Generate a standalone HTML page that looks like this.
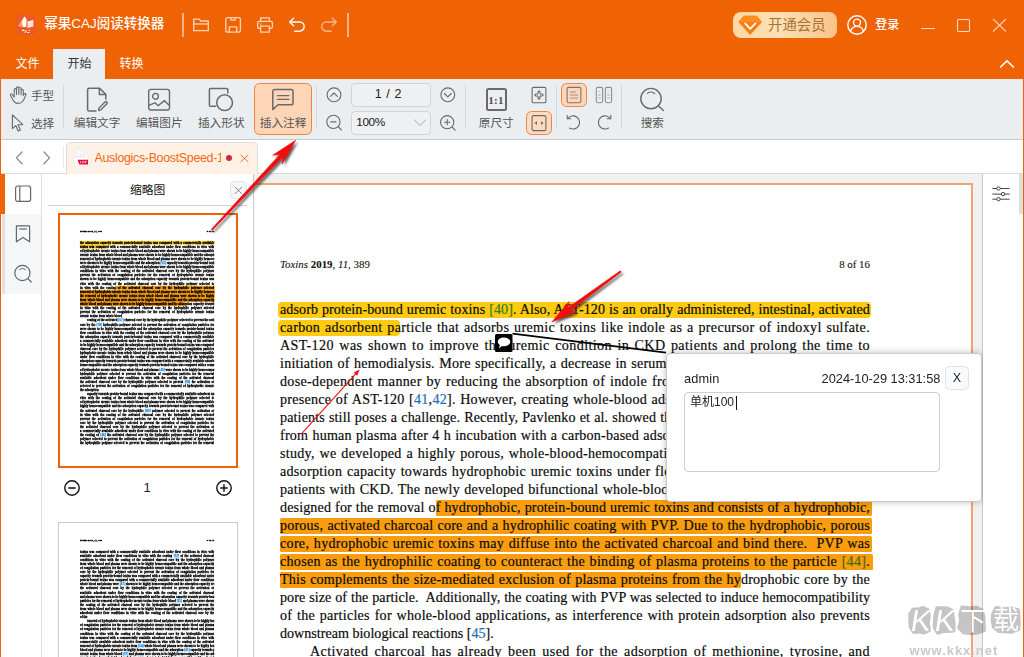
<!DOCTYPE html>
<html lang="en">
<head>
<meta charset="utf-8">
<title>CAJ Reader</title>
<style>
*{box-sizing:border-box;margin:0;padding:0}
html,body{width:1024px;height:657px;overflow:hidden;background:#fff}
body{position:relative;font-family:"Liberation Sans",sans-serif;font-size:13px;color:#333}
.abs{position:absolute}
svg.t{display:block;overflow:visible}
svg{display:block}
.tx{display:block;white-space:nowrap;font-family:"Liberation Sans","Noto Sans CJK SC",sans-serif}
/* ---------- title bar ---------- */
#titlebar{position:absolute;left:0;top:0;width:1024px;height:79px;background:#f06305}
#tabactive{position:absolute;left:53px;top:49px;width:52px;height:31px;background:#ebeef0}
/* ---------- toolbar ---------- */
#toolbar{position:absolute;left:1px;top:79px;width:1023px;height:61px;background:#ebeef0;border-bottom:1px solid #c9cccf}
.vsep{position:absolute;width:1px;background:#d3d6d9;top:85px;height:44px}
.lbl{position:absolute;color:#555}
.actbtn{position:absolute;background:#ffd5b8;border:1.2px solid #f2853c;border-radius:5.5px}
.inbox{position:absolute;border:1px solid #d2d5d8;border-radius:4px;background:#eef0f2;height:23px;color:#222;font-size:13px;line-height:21px}
/* ---------- doc tabs ---------- */
#tabrow{position:absolute;left:1px;top:140px;width:1023px;height:34px;background:#fff;border-bottom:1px solid #d9d9d9}
#doctab{position:absolute;left:66px;top:142px;width:192px;height:32px;background:#fff1e6;border:1px solid #dfdcda;border-bottom:none;border-radius:5px 5px 0 0}
/* ---------- left ---------- */
#leftedge{position:absolute;left:0;top:79px;width:1px;height:578px;background:#f06305}
#sidebar{position:absolute;left:1px;top:174px;width:41px;height:483px;background:#fff;border-right:1px solid #dcdcdc}
#thumbs{position:absolute;left:42px;top:174px;width:212px;height:483px;background:#fff;border-right:1px solid #c8c8c8}
/* ---------- doc ---------- */
#docarea{position:absolute;left:254px;top:174px;width:728px;height:483px;background:#f1f1f1;overflow:hidden}
#page{position:absolute;left:0;top:9px;width:719px;height:480px;background:#fff;border-top:2px solid #f0a472;border-right:2px solid #f0a472}
#rightpanel{position:absolute;left:982px;top:174px;width:41px;height:483px;background:#fff;border-left:1px solid #c8c8c8}
#rightedge{position:absolute;left:1023px;top:79px;width:1px;height:578px;background:#f06305}
.ln{position:absolute;left:280px;width:590px;height:18px;line-height:18px;font-family:"Liberation Serif",serif;font-size:14.1px;color:#0a0a0a;-webkit-text-stroke-width:.18px;text-align:justify;text-align-last:justify;white-space:nowrap}
.ln.last{text-align:left;text-align-last:left}
.hy{position:absolute;background:#ffcb10;height:16px;border-radius:4px}
.ho{position:absolute;background:#f99d0f;height:16px;border-radius:1.5px}
.g{color:#2e7d1e}.b{color:#1a6fb5}
.thumbtxt{height:10px}
.tl{position:absolute;left:0;width:590px;height:18px;line-height:18px;font-family:"Liberation Serif",serif;font-size:14.35px;color:#000;text-align:justify;text-align-last:justify;white-space:nowrap;-webkit-text-stroke:1.35px #000;overflow:hidden}
.tb{color:#2a8fe0;-webkit-text-stroke:1.35px #2a8fe0}
</style>
</head>
<body>
<div id="titlebar"></div>
<div id="tabactive"></div>
<div id="toolbar"></div>
<div id="tabrow"></div>
<div id="doctab"></div>
<div id="leftedge"></div>
<div id="sidebar"></div>
<div id="thumbs"></div>
<div id="docarea"><div id="page"></div></div>
<div id="rightpanel"></div>
<div id="rightedge"></div>
<div class="abs" style="left:1019px;top:174px;width:4px;height:40px;background:#d9dde5"></div>
<svg class="abs" style="left:991px;top:184px" width="20" height="20" viewBox="0 0 20 20" fill="#fff" stroke="#444" stroke-width="1"><path d="M1.4 4.5 H18.6 M1.4 10.1 H18.6 M1.4 15.2 H18.6"/><circle cx="7.5" cy="4.5" r="1.7"/><circle cx="12" cy="10.1" r="1.7"/><circle cx="7.5" cy="15.2" r="1.7"/></svg>

<!-- app icon -->
<svg class="abs" style="left:16px;top:15px" width="20" height="20" viewBox="0 0 20 20">
  <rect x="0" y="0" width="20" height="20" rx="3" fill="#ee5a26"/>
  <path d="M2 11.2 L5.8 4.6 L8.4 12.6 Z" fill="#f9a06b"/>
  <path d="M8.5 1.6 C10.9 3.6 11.6 7.2 10.4 12 L7.6 12 C5.3 9 5.7 4.4 8.5 1.6 Z" fill="#fff"/>
  <path d="M11.2 6.4 L17.4 5 L17.4 11.4 L11.6 13 Z" fill="#ffe3da"/>
  <path d="M10.7 6 L10.7 13.4" stroke="#ee5a26" stroke-width="0.7"/>
  <path d="M6 15.4h2.6M9 17.8l1.5-2.3M11.2 17.5h2.2M13 15.5l1-.5" stroke="#fff" stroke-width="1.1" fill="none"/>
</svg>
<div class="abs" style="left:44.3px;top:16.2px;color:#fff"><span class="tx" style="font-size:13.5px;line-height:16.1px;font-weight:500">幂果CAJ阅读转换器</span></div>
<div class="abs" style="left:182px;top:13px;width:1.5px;height:24px;background:#f9b186"></div>
<div class="abs" style="left:347px;top:13px;width:1.5px;height:24px;background:#f9b186"></div>
<!-- folder -->
<svg class="abs" style="left:192px;top:16px" width="18" height="18" viewBox="0 0 18 18" fill="none" stroke="#ffd5b8" stroke-width="1.3" stroke-linejoin="round">
  <path d="M1.7 14.7 V3.2 H7.2 L8.7 5 H16.3 V14.7 Z"/><path d="M1.7 8 H16.3"/>
</svg>
<!-- save -->
<svg class="abs" style="left:224px;top:16px" width="18" height="18" viewBox="0 0 18 18" fill="none" stroke="#ffd5b8" stroke-width="1.3" stroke-linejoin="round">
  <rect x="1.8" y="1.6" width="14.6" height="14.6" rx="1.8"/><path d="M5.3 16 V10.8 H12.7 V16"/><path d="M7 1.8 V4.2 H11 V1.8"/>
</svg>
<!-- print -->
<svg class="abs" style="left:256px;top:16px" width="18" height="18" viewBox="0 0 18 18" fill="none" stroke="#ffd5b8" stroke-width="1.3" stroke-linejoin="round">
  <path d="M4.6 5.4 V1.8 H13.4 V5.4"/><rect x="1.6" y="5.4" width="14.8" height="7" rx="1.6"/><rect x="4.6" y="10.2" width="8.8" height="6" fill="#f06305"/><path d="M3.6 8h2" stroke-width="1.1"/>
</svg>
<!-- undo -->
<svg class="abs" style="left:288px;top:16px" width="18" height="18" viewBox="0 0 18 18" fill="none" stroke="#fff" stroke-width="1.4" stroke-linecap="round" stroke-linejoin="round">
  <path d="M5.6 2.2 L1.8 6 L5.6 9.8"/><path d="M2.2 6 H11.6 A4.6 4.6 0 0 1 11.6 15.2 H6.8"/>
</svg>
<!-- redo -->
<svg class="abs" style="left:320px;top:16px" width="18" height="18" viewBox="0 0 18 18" fill="none" stroke="#fbb58a" stroke-width="1.4" stroke-linecap="round" stroke-linejoin="round">
  <path d="M12.4 2.2 L16.2 6 L12.4 9.8"/><path d="M15.8 6 H6.4 A4.6 4.6 0 0 0 6.4 15.2 H11.2"/>
</svg>
<!-- vip button -->
<div class="abs" style="left:733px;top:12px;width:104px;height:26px;border-radius:8px;background:linear-gradient(90deg,#ffd9a4 0%,#fde0b4 45%,#f9c388 100%)"></div>
<svg class="abs" style="left:737.8px;top:14.6px" width="24.4" height="20.4" viewBox="0 0 24 20">
  <path d="M5.6 0.6 H18.4 L23.6 6.8 L12 19.6 L0.4 6.8 Z" fill="#fb7c10"/>
  <path d="M5.6 0.6 H18.4 L23.6 6.8 H0.4 Z" fill="#ff9524" opacity=".75"/>
  <path d="M7 8.2 L12 13.6 L17.2 8.2" fill="none" stroke="#fff" stroke-width="1.7" stroke-linecap="round" stroke-linejoin="round"/>
</svg>
<div class="abs" style="left:767.5px;top:17.3px;color:#a8723a"><span class="tx" style="font-size:14.4px;line-height:17.1px;padding-left:0.5px">开通会员</span></div>
<!-- user -->
<svg class="abs" style="left:845.8px;top:13.6px" width="22" height="22" viewBox="0 0 22 22" fill="none" stroke="#fff" stroke-width="1.4">
  <circle cx="11" cy="11" r="9.2"/><circle cx="11" cy="8.6" r="3.5"/><path d="M4.6 17.4 C5.6 13.6 8 12.4 11 12.4 C14 12.4 16.4 13.6 17.4 17.4"/>
</svg>
<div class="abs" style="left:875px;top:18.2px;color:#fff"><span class="tx" style="font-size:12px;line-height:14.2px;font-weight:500;padding-left:0.3px">登录</span></div>
<!-- window controls -->
<div class="abs" style="left:921px;top:28px;width:13.5px;height:1.2px;background:#ffdcc6"></div>
<div class="abs" style="left:957px;top:19px;width:13px;height:13px;border:1.15px solid #ffdcc6;border-radius:1px"></div>
<svg class="abs" style="left:992.2px;top:18.4px" width="15" height="14.4" viewBox="0 0 15 15" preserveAspectRatio="none" stroke="#ffdcc6" stroke-width="1.15" stroke-linecap="round"><path d="M1.4 1.4 L13.6 13.6 M13.6 1.4 L1.4 13.6"/></svg>
<svg class="abs" style="left:999px;top:59px" width="16" height="10" viewBox="0 0 16 10" fill="none" stroke="#fff" stroke-width="1.7" stroke-linecap="round" stroke-linejoin="round"><path d="M1.6 8 L8 1.8 L14.4 8"/></svg>
<!-- menu -->
<div class="abs" style="left:15px;top:57.2px;color:#fff"><span class="tx" style="font-size:12px;line-height:14.3px;padding-left:0.4px">文件</span></div>
<div class="abs" style="left:67px;top:57.2px;color:#333"><span class="tx" style="font-size:12px;line-height:14.3px;padding-left:0.4px">开始</span></div>
<div class="abs" style="left:119px;top:57.2px;color:#fff"><span class="tx" style="font-size:12px;line-height:14.3px;padding-left:0.4px">转换</span></div>

<!-- hand / select -->
<svg class="abs" style="left:9px;top:85px" width="19" height="20" viewBox="0 0 19 20" fill="none" stroke="#6a6a6a" stroke-width="1.1" stroke-linecap="round" stroke-linejoin="round">
  <path d="M5.2 11.6 V4.8 a1.15 1.15 0 0 1 2.3 0 V9.5 M7.5 9.5 V3 a1.15 1.15 0 0 1 2.3 0 V9.3 M9.8 9.3 V3.6 a1.15 1.15 0 0 1 2.3 0 V9.8 M12.1 9.8 V5.4 a1.1 1.1 0 0 1 2.2 0 V10.6 C14.3 10 15 8.6 16.2 8.6 C17.2 8.7 17 9.8 16.6 10.6 C15.8 12.4 15.3 14.3 13.9 16 C12.7 17.6 11 18.4 9 18.4 C6.6 18.4 5 17 3.8 14.8 L1.6 10.4 C1 9.2 2.5 8.4 3.3 9.5 L5.2 12.2"/>
</svg>
<div class="lbl" style="left:30.5px;top:89px"><span class="tx" style="font-size:11.6px;line-height:13.7px;padding-left:0.4px">手型</span></div>
<svg class="abs" style="left:10px;top:113px" width="16" height="20" viewBox="0 0 16 20" fill="none" stroke="#6a6a6a" stroke-width="1.15" stroke-linejoin="round">
  <path d="M2.4 1.8 V15.6 L5.8 12.6 L8.2 18 L10.4 17 L8 11.8 L12.8 11.6 Z"/>
</svg>
<div class="lbl" style="left:30.5px;top:117px"><span class="tx" style="font-size:11.6px;line-height:13.7px;padding-left:0.4px">选择</span></div>
<div class="vsep" style="left:63px"></div>
<!-- edit text -->
<svg class="abs" style="left:85px;top:86px" width="24" height="27" viewBox="0 0 24 27" fill="none" stroke="#6a6a6a" stroke-width="1.5" stroke-linejoin="round" stroke-linecap="round">
  <path d="M11 25 H4.2 a1.6 1.6 0 0 1 -1.6 -1.6 V3.8 a1.6 1.6 0 0 1 1.6 -1.6 H14.6 L20.8 8.4 V13"/>
  <path d="M14.4 2.4 V8.6 H20.6"/>
  <path d="M13.6 24.6 L14 21.9 L20 15.9 a1.3 1.3 0 0 1 1.9 1.9 L15.9 23.8 Z" stroke-width="1.4"/>
</svg>
<div class="lbl" style="left:73.3px;top:116.2px"><span class="tx" style="font-size:11.7px;line-height:13.7px;padding-left:0.4px">编辑文字</span></div>
<!-- edit image -->
<svg class="abs" style="left:147px;top:87px" width="24" height="25" viewBox="0 0 24 25" fill="none" stroke="#6a6a6a" stroke-width="1.4" stroke-linejoin="round">
  <rect x="1.7" y="2.4" width="20.8" height="20.6" rx="2.2"/>
  <circle cx="8.5" cy="9.3" r="2.9"/>
  <path d="M1.8 18.4 L7.9 15.8 L11.2 18.8 L17.3 13.6 L22.4 18.6"/>
</svg>
<div class="lbl" style="left:135.5px;top:116.2px"><span class="tx" style="font-size:11.7px;line-height:13.7px;padding-left:0.4px">编辑图片</span></div>
<!-- insert shape -->
<svg class="abs" style="left:207px;top:86px" width="28" height="27" viewBox="0 0 28 27" fill="none" stroke="#6a6a6a" stroke-width="1.5" stroke-linejoin="round" stroke-linecap="butt">
  <path d="M9.2 20.3 H3.6 a1.2 1.2 0 0 1 -1.2 -1.2 V3.6 a1.2 1.2 0 0 1 1.2 -1.2 H19.6 a1.2 1.2 0 0 1 1.2 1.2 V7.6"/>
  <circle cx="17.6" cy="16.7" r="7.9"/>
</svg>
<div class="lbl" style="left:197.5px;top:116.2px"><span class="tx" style="font-size:11.7px;line-height:13.7px;padding-left:0.4px">插入形状</span></div>
<!-- insert comment (active) -->
<div class="actbtn" style="left:254px;top:83px;width:58px;height:52px"></div>
<svg class="abs" style="left:270px;top:86px" width="26" height="27" viewBox="0 0 26 27" fill="none" stroke="#6a6a6a" stroke-width="1.5" stroke-linejoin="round" stroke-linecap="round">
  <path d="M2.8 23.6 V5.2 a1.8 1.8 0 0 1 1.8 -1.8 H21.2 a1.8 1.8 0 0 1 1.8 1.8 V17 a1.8 1.8 0 0 1 -1.8 1.8 H8 Z"/>
  <path d="M7.4 9.6 H18.8 M7.4 13.4 H18.8" stroke-width="1.4"/>
</svg>
<div class="lbl" style="left:259.3px;top:116.2px"><span class="tx" style="font-size:11.7px;line-height:13.7px;padding-left:0.4px">插入注释</span></div>
<div class="vsep" style="left:316px"></div>
<!-- page nav -->
<svg class="abs" style="left:325px;top:86px" width="18" height="18" viewBox="0 0 18 18" fill="none" stroke="#6a6a6a" stroke-width="1.1" stroke-linecap="round" stroke-linejoin="round">
  <circle cx="9" cy="8.8" r="6.9"/><path d="M5.6 10.3 L9 7 L12.4 10.3"/>
</svg>
<div class="inbox" style="left:351px;top:83px;width:80px;height:24px;text-align:center;padding-right:6px;line-height:20.6px"><span style="font-size:12.5px;word-spacing:1.2px">1 / 2</span></div>
<svg class="abs" style="left:439px;top:86px" width="18" height="18" viewBox="0 0 18 18" fill="none" stroke="#6a6a6a" stroke-width="1.1" stroke-linecap="round" stroke-linejoin="round">
  <circle cx="8.8" cy="8.8" r="6.9"/><path d="M5.4 7.5 L8.8 10.8 L12.2 7.5"/>
</svg>
<svg class="abs" style="left:325px;top:113px" width="19" height="19" viewBox="0 0 19 19" fill="none" stroke="#6a6a6a" stroke-width="1.1" stroke-linecap="round">
  <circle cx="8.4" cy="8.9" r="6.6"/><path d="M13.2 13.7 L16.4 17 M5.8 8.9 H11"/>
</svg>
<div class="inbox" style="left:351px;top:111px;width:80px;height:24px;padding-left:4.3px;line-height:20.6px"><span style="font-size:11.8px;letter-spacing:-.4px">100%</span></div>
<svg class="abs" style="left:413px;top:118px" width="14" height="9" viewBox="0 0 14 9" fill="none" stroke="#c3c7ca" stroke-width="1.2" stroke-linecap="round" stroke-linejoin="round"><path d="M1.4 2 L7 7.4 L12.6 2"/></svg>
<svg class="abs" style="left:439px;top:113px" width="19" height="19" viewBox="0 0 19 19" fill="none" stroke="#6a6a6a" stroke-width="1.1" stroke-linecap="round">
  <circle cx="8.2" cy="9.2" r="6.6"/><path d="M13 14 L16.2 17.2 M5.6 9.2 H10.8 M8.2 6.6 V11.8"/>
</svg>
<div class="vsep" style="left:465px"></div>
<!-- 1:1 -->
<div class="abs" style="left:485.5px;top:88px;width:21px;height:23px;border:2px solid #6a6a6a;border-radius:2.5px"></div>
<div class="abs" style="left:486px;top:93px;width:20px;text-align:center;font-family:'Liberation Serif',serif;font-weight:bold;font-size:11px;line-height:14px;color:#505050;letter-spacing:.2px">1:1</div>
<div class="lbl" style="left:478.3px;top:116.2px"><span class="tx" style="font-size:11.7px;line-height:13.7px;padding-left:0.4px">原尺寸</span></div>
<!-- fit page -->
<svg class="abs" style="left:531px;top:86px" width="16" height="18" viewBox="0 0 16 18" fill="none" stroke="#6a6a6a" stroke-width="1.1">
  <rect x="1.1" y="1.4" width="13.8" height="15.3" rx="1.3"/>
  <rect x="6.2" y="7.1" width="3.6" height="3.8" stroke-width=".9"/>
  <path d="M8 4.1 L10 6.2 H6 Z M8 13.9 L10 11.8 H6 Z M3.1 9 L5.2 7 V11 Z M12.9 9 L10.8 7 V11 Z" fill="#6a6a6a" stroke="none"/>
</svg>
<!-- fit width active -->
<div class="actbtn" style="left:526px;top:111px;width:26px;height:24px;background:#ffdac1"></div>
<svg class="abs" style="left:531px;top:114px" width="16" height="18" viewBox="0 0 16 18" fill="none" stroke="#6a6a6a" stroke-width="1.1">
  <rect x="1.1" y="1.6" width="13.8" height="15" rx="1.3"/>
  <path d="M3.4 9.1 L6 7.2 V11 Z M12.6 9.1 L10 7.2 V11 Z" fill="#6a6a6a" stroke="none"/>
</svg>
<div class="vsep" style="left:556px"></div>
<!-- single page (active) -->
<div class="actbtn" style="left:561px;top:83px;width:26px;height:24px;background:#ffd6ba"></div>
<svg class="abs" style="left:566px;top:86px" width="16" height="18" viewBox="0 0 16 18" fill="none" stroke="#777" stroke-width="1.1">
  <rect x="1.1" y="1.4" width="13.8" height="15.3" rx="1.5"/>
  <path d="M4 6 H9.8 M4 9 H12 M4 12 H12" stroke="#c9a693" stroke-width="1.3"/>
</svg>
<!-- double page -->
<svg class="abs" style="left:595px;top:86px" width="18" height="18" viewBox="0 0 18 18" fill="none" stroke="#8f8f8f" stroke-width="1.1">
  <rect x="1.3" y="1.4" width="6.3" height="15.3" rx="1.6"/><rect x="10.3" y="1.4" width="6.3" height="15.3" rx="1.6"/>
  <path d="M3.6 5.6h1M3.2 9h2.6M3.2 12h2.6M12.6 5.6h1M12.2 9h2.6M12.2 12h2.6" stroke="#aaa" stroke-width="1"/>
</svg>
<!-- rotate -->
<svg class="abs" style="left:565px;top:113px" width="18" height="19" viewBox="0 0 18 19" fill="none" stroke="#6a6a6a" stroke-width="1.1" stroke-linecap="round" stroke-linejoin="round">
  <path d="M2.6 5.6 A6.6 6.6 0 1 1 4.4 15"/><path d="M2.2 2.4 V5.8 H5.8"/>
</svg>
<svg class="abs" style="left:595px;top:113px" width="18" height="19" viewBox="0 0 18 19" fill="none" stroke="#6a6a6a" stroke-width="1.1" stroke-linecap="round" stroke-linejoin="round">
  <path d="M15.4 5.6 A6.6 6.6 0 1 0 13.6 15"/><path d="M15.8 2.4 V5.8 H12.2"/>
</svg>
<div class="vsep" style="left:621px"></div>
<!-- search -->
<svg class="abs" style="left:638px;top:86px" width="28" height="27" viewBox="0 0 28 27" fill="none" stroke="#6a6a6a" stroke-width="1.4" stroke-linecap="round">
  <circle cx="13" cy="12.6" r="10.2"/><path d="M20.4 19.8 L25.4 24.6"/><path d="M9.4 7.4 A5.6 5.6 0 0 1 16.8 7.6" stroke-width="1.2"/>
</svg>
<div class="lbl" style="left:640.3px;top:116.2px"><span class="tx" style="font-size:11.6px;line-height:13.7px;padding-left:0.4px">搜索</span></div>

<svg class="abs" style="left:14px;top:150px" width="10" height="16" viewBox="0 0 10 16" fill="none" stroke="#8a8a8a" stroke-width="1.3" stroke-linecap="round" stroke-linejoin="round"><path d="M8 2 L2.4 7.9 L8 13.8"/></svg>
<svg class="abs" style="left:42px;top:150px" width="10" height="16" viewBox="0 0 10 16" fill="none" stroke="#8a8a8a" stroke-width="1.3" stroke-linecap="round" stroke-linejoin="round"><path d="M2 2 L7.6 7.9 L2 13.8"/></svg>
<div class="abs" style="left:63px;top:146px;width:1px;height:22px;background:#ececec"></div>
<!-- pdf icon -->
<svg class="abs" style="left:73px;top:148px" width="16" height="20" viewBox="0 0 16 20">
  <path d="M1.2 1.2 H10.6 L14.6 5 V18.2 H1.2 Z" fill="#fdfdfd" stroke="#e9e9e9" stroke-width=".7"/>
  <path d="M10.6 1.2 V5 H14.6 Z" fill="#ececec"/>
  <path d="M2.6 4.2h2M6.4 3.8h3M2.6 6.4h1.6M6.4 6.4h6.4M2.4 8.8h10.4" stroke="#dcdcdc" stroke-width=".9"/>
  <path d="M4.6 11.8 H15 V16.4 H6.2 Z" fill="#e8073f"/>
  <path d="M7.6 13.2v2M9.4 13.2v2M10.2 13.2h.8v1.9M12.6 13.2v2M12.6 13.4h1.2" stroke="#fff" stroke-width=".8" opacity=".9"/>
</svg>
<div class="abs" style="left:94.5px;top:149px;width:126px;height:18px;overflow:hidden;white-space:nowrap;font-size:12.4px;line-height:18px;color:#f06a12;letter-spacing:-.3px">Auslogics-BoostSpeed-1</div>
<div class="abs" style="left:225.5px;top:155px;width:6px;height:6px;border-radius:3px;background:#d9253f"></div>
<svg class="abs" style="left:239.4px;top:153.2px" width="11" height="11" viewBox="0 0 11 11" stroke="#f0742a" stroke-width="1" stroke-linecap="round"><path d="M1.8 2.2 L9 8.6 M9 2.2 L1.8 8.6"/></svg>

<div class="abs" style="left:0;top:174px;width:5px;height:40px;background:#f06305"></div>
<div class="abs" style="left:1.5px;top:214px;width:39.5px;height:80px;background:#f5f6f8"></div>
<div class="abs" style="left:1.5px;top:214px;width:3.5px;height:80px;background:#dfe2e6"></div>
<svg class="abs" style="left:14px;top:184px" width="18" height="19" viewBox="0 0 18 19" fill="none" stroke="#666" stroke-width="1.2"><rect x="1.6" y="2" width="15" height="15.4" rx="2.2"/><path d="M5.8 2 V17.4"/></svg>
<svg class="abs" style="left:14px;top:224px" width="18" height="20" viewBox="0 0 18 20" fill="none" stroke="#666" stroke-width="1.2" stroke-linejoin="round"><path d="M2.4 1.8 H15.6 V17.8 L9 13.4 L2.4 17.8 Z"/><path d="M5.2 5 H12.8"/></svg>
<svg class="abs" style="left:13px;top:263px" width="20" height="21" viewBox="0 0 20 21" fill="none" stroke="#666" stroke-width="1.2" stroke-linecap="round"><circle cx="9.4" cy="10" r="7.6"/><path d="M14.9 15.6 L18.2 19"/><path d="M6.6 6.4 A4.4 4.4 0 0 1 12.4 6.5" stroke-width="1"/></svg>
<div class="abs" style="left:129.5px;top:184px;color:#111"><span class="tx" style="font-size:11.8px;line-height:13.9px;padding-left:0.4px">缩略图</span></div>
<div class="abs" style="left:229.5px;top:181px;width:17.5px;height:18px;border:1px solid #e0e3e7;border-radius:4.5px;background:#f6f7f9"></div>
<svg class="abs" style="left:234px;top:186px" width="9" height="9" viewBox="0 0 9 9" stroke="#777" stroke-width=".9" stroke-linecap="round"><path d="M1.2 1.2 L7.6 7.6 M7.6 1.2 L1.2 7.6"/></svg>
<div class="abs" style="left:48px;top:205px;width:199px;height:1px;background:#cfcfcf"></div>
<div class="abs" style="left:58px;top:213px;width:180px;height:254.5px;border:2px solid #f06305;background:#fff"></div>
<div class="abs" style="left:58px;top:522px;width:180px;height:140px;border:1px solid #c9c9c9;background:#fff"></div>
<svg class="abs" style="left:63px;top:479px" width="18" height="18" viewBox="0 0 18 18" fill="none" stroke="#161616" stroke-width="1.45" stroke-linecap="round"><circle cx="9" cy="9" r="7.2"/><path d="M5.8 9 H12.2"/></svg>
<svg class="abs" style="left:215px;top:479px" width="18" height="18" viewBox="0 0 18 18" fill="none" stroke="#161616" stroke-width="1.45" stroke-linecap="round"><circle cx="9" cy="9" r="7.2"/><path d="M5.8 9 H12.2 M9 5.8 V12.2"/></svg>
<div class="abs" style="left:137px;top:480px;width:20px;text-align:center;font-size:13px;line-height:16px;color:#222">1</div>
<div class="abs thumbtxt" style="left:80.2px;top:226.5px;width:590px;transform:scale(0.2275);transform-origin:0 0">
<div class="hy" style="left:-2px;top:60px;width:594px;height:17px"></div><div class="hy" style="left:-2px;top:78px;width:122px;height:17px"></div><div class="ho" style="left:157px;top:258px;width:435px;height:18px"></div><div class="ho" style="left:0;top:276px;width:592px;height:54px"></div><div class="ho" style="left:0;top:330px;width:461px;height:17px"></div>
<div class="tl" style="top:11px;font-size:11.5px;font-weight:bold;text-align:left;text-align-last:left"><i>Toxins</i> <b>2019</b>, <i>11</i>, 389</div>
<div class="tl" style="top:11px;font-size:11.5px;font-weight:bold;text-align:right;text-align-last:right">8 of 16</div>
<div class="tl" style="top:59px">the adsorption capacity towards protein-bound toxins was compared with a commercially available</div>
<div class="tl" style="top:77px">toxins was compared with a commercially available adsorbent under flow conditions in vitro with</div>
<div class="tl" style="top:95px">of hydrophobic uremic toxins from whole blood and plasma were shown to be highly hemocompatible</div>
<div class="tl" style="top:113px">uremic toxins from whole blood and plasma were shown to be highly hemocompatible and the adsorption</div>
<div class="tl" style="top:131px">removal of hydrophobic uremic toxins from whole blood and plasma were shown to be highly hemocompatible</div>
<div class="tl" style="top:149px">were shown to be highly hemocompatible and the adsorption <span class="tb">[53]</span> capacity towards protein-bound toxins</div>
<div class="tl" style="top:167px">of hydrophobic uremic toxins from whole blood and plasma were shown to be highly hemocompatible</div>
<div class="tl" style="top:185px">conditions in vitro with the coating of the activated charcoal core by the hydrophilic polymer</div>
<div class="tl" style="top:203px">prevent the activation of coagulation particles for the removal of hydrophobic uremic toxins</div>
<div class="tl" style="top:221px">shown to be highly hemocompatible and the adsorption capacity towards protein-bound toxins was</div>
<div class="tl" style="top:239px">vitro with the coating of the activated charcoal core by the hydrophilic polymer selected to</div>
<div class="tl" style="top:257px">in vitro with the coating of the activated charcoal core by the hydrophilic polymer selected</div>
<div class="tl" style="top:275px">removal of hydrophobic uremic toxins from whole blood and plasma were shown to be highly hemocompatible</div>
<div class="tl" style="top:293px">the removal of hydrophobic uremic toxins from whole blood and plasma were shown to be highly</div>
<div class="tl" style="top:311px">from whole blood and plasma were shown to be highly hemocompatible and the adsorption capacity</div>
<div class="tl" style="top:329px">whole blood and plasma were shown to be highly hemocompatible and the adsorption capacity towards</div>
<div class="tl" style="top:347px">in vitro with the coating of the activated charcoal core by the hydrophilic polymer selected</div>
<div class="tl" style="top:365px">prevent the activation of coagulation particles for the removal of hydrophobic uremic toxins</div>
<div class="tl" style="top:383px;text-align:left;text-align-last:left">uremic toxins from whole blood</div>
<div class="tl" style="top:401px;left:30px;width:560px">coating of the activated <span class="tb">[57]</span> charcoal core by the hydrophilic polymer selected to prevent the activation</div>
<div class="tl" style="top:419px">core by the <span class="tb">[59]</span> hydrophilic polymer selected to prevent the activation of coagulation particles for</div>
<div class="tl" style="top:437px">were shown to be highly hemocompatible and the adsorption capacity towards protein-bound toxins</div>
<div class="tl" style="top:455px">flow conditions in vitro with the coating of the activated charcoal core by the hydrophilic polymer</div>
<div class="tl" style="top:473px">the adsorption capacity towards protein-bound toxins was compared with a commercially available</div>
<div class="tl" style="top:491px">a commercially available adsorbent under flow conditions in vitro with the coating of the activated</div>
<div class="tl" style="top:509px">to be highly hemocompatible and the adsorption capacity towards protein-bound toxins was compared</div>
<div class="tl" style="top:527px">charcoal core by the hydrophilic polymer selected to prevent the activation of coagulation particles</div>
<div class="tl" style="top:545px">hydrophobic uremic toxins from whole blood and plasma were shown to be highly hemocompatible</div>
<div class="tl" style="top:563px">under flow conditions in vitro with the coating of the activated charcoal core by the hydrophilic</div>
<div class="tl" style="top:581px">adsorption capacity towards protein-bound toxins was compared with a commercially available adsorbent</div>
<div class="tl" style="top:599px">hemocompatible and the adsorption capacity towards protein-bound toxins was compared with a commercially</div>
<div class="tl" style="top:617px">of hydrophobic uremic toxins from whole blood and plasma <span class="tb">[45]</span> were shown to be highly hemocompatible</div>
<div class="tl" style="top:635px">hydrophilic polymer selected to prevent the activation of coagulation particles for the removal</div>
<div class="tl" style="top:653px">available adsorbent under flow conditions in vitro with the coating of the activated charcoal</div>
<div class="tl" style="top:671px">the activated charcoal core by the hydrophilic polymer selected to prevent <span class="tb">[58]</span> the activation of</div>
<div class="tl" style="top:689px">selected to prevent the activation of coagulation particles for the removal of hydrophobic uremic</div>
<div class="tl" style="top:707px;text-align:left;text-align-last:left">the adsorption</div>
<div class="tl" style="top:725px;left:30px;width:560px">capacity towards protein-bound toxins was compared with a commercially available adsorbent under</div>
<div class="tl" style="top:743px">vitro with the coating of the activated charcoal core by the hydrophilic polymer selected to</div>
<div class="tl" style="top:761px">of hydrophobic uremic toxins from whole blood and plasma were shown to be highly hemocompatible</div>
<div class="tl" style="top:779px">highly hemocompatible and the adsorption capacity towards protein-bound toxins was compared with</div>
<div class="tl" style="top:797px">the activated charcoal core by the hydrophilic <span class="tb">[60]</span> polymer selected to prevent the activation of</div>
<div class="tl" style="top:815px">in vitro with the coating of the activated charcoal core by the hydrophilic polymer selected</div>
<div class="tl" style="top:833px">prevent the activation of coagulation particles for the removal of hydrophobic uremic toxins</div>
<div class="tl" style="top:851px">core by the hydrophilic polymer selected to prevent the activation of coagulation particles for</div>
<div class="tl" style="top:869px">the activated charcoal core by the hydrophilic polymer selected to prevent the activation of</div>
<div class="tl" style="top:887px">a commercially available adsorbent under flow conditions in vitro with the coating of the activated</div>
<div class="tl" style="top:905px">the coating of <span class="tb">[46]</span> the activated charcoal core by the hydrophilic polymer selected to prevent the</div>
<div class="tl" style="top:923px">polymer selected to prevent the activation of coagulation particles for the removal of hydrophobic</div>
<div class="tl" style="top:941px">the hydrophilic polymer selected to prevent the activation of coagulation particles for the removal</div>
</div>
<div class="abs thumbtxt" style="left:80.2px;top:535.5px;width:590px;transform:scale(0.2275);transform-origin:0 0">
<div class="tl" style="top:11px;font-size:11.5px;font-weight:bold;text-align:left;text-align-last:left"><i>Toxins</i> <b>2019</b>, <i>11</i>, 389</div>
<div class="tl" style="top:11px;font-size:11.5px;font-weight:bold;text-align:right;text-align-last:right">8 of 16</div>
<div class="tl" style="top:59px">toxins was compared with a commercially available adsorbent under flow conditions in vitro with</div>
<div class="tl" style="top:77px">available adsorbent under flow conditions in vitro with the coating <span class="tb">[52]</span> of the activated charcoal</div>
<div class="tl" style="top:95px">conditions in vitro with the coating of the activated charcoal core by the hydrophilic polymer</div>
<div class="tl" style="top:113px">from whole blood and plasma were shown to be highly hemocompatible and the adsorption capacity</div>
<div class="tl" style="top:131px">of coagulation particles for the removal of hydrophobic uremic toxins from whole blood and plasma</div>
<div class="tl" style="top:149px">core by the hydrophilic polymer selected to prevent the activation of coagulation particles for</div>
<div class="tl" style="top:167px">capacity towards protein-bound toxins was compared with a commercially available adsorbent under</div>
<div class="tl" style="top:185px">protein-bound toxins was compared with a commercially available adsorbent under flow conditions</div>
<div class="tl" style="top:203px">whole blood and plasma were <span class="tb">[47]</span> shown to be highly hemocompatible and the adsorption capacity towards</div>
<div class="tl" style="top:221px">the activated charcoal core by the hydrophilic polymer selected to prevent the activation of</div>
<div class="tl" style="top:239px">available adsorbent under flow conditions in vitro with the coating of the activated charcoal</div>
<div class="tl" style="top:257px">and plasma were shown to be highly hemocompatible and the adsorption capacity towards protein-bound</div>
<div class="tl" style="top:275px">particles for the removal of hydrophobic uremic toxins from whole blood <span class="tb">[51]</span> and plasma were shown</div>
<div class="tl" style="top:293px">the coating of the activated charcoal core by the hydrophilic polymer selected to prevent the</div>
<div class="tl" style="top:311px">from whole blood and plasma were shown to be highly hemocompatible and the adsorption capacity</div>
<div class="tl" style="top:329px">adsorbent under flow conditions in vitro with the coating of the activated charcoal core by the</div>
<div class="tl" style="top:347px;text-align:left;text-align-last:left">of the</div>
<div class="tl" style="top:365px;left:30px;width:560px">removal of hydrophobic uremic toxins from whole blood and plasma were shown to be highly hemocompatible</div>
<div class="tl" style="top:383px">of coagulation particles for the removal of hydrophobic uremic toxins from whole blood and plasma</div>
<div class="tl" style="top:401px">of coagulation particles for the removal of hydrophobic uremic toxins from whole blood and plasma</div>
<div class="tl" style="top:419px">conditions in vitro with the coating of the activated charcoal core by the hydrophilic polymer</div>
<div class="tl" style="top:437px">toxins was compared with a commercially available adsorbent under flow conditions in vitro with</div>
<div class="tl" style="top:455px">commercially available adsorbent under flow conditions in vitro with the coating of the activated</div>
<div class="tl" style="top:473px">removal of hydrophobic uremic toxins from <span class="tb">[54]</span> whole blood and plasma were shown to be highly hemocompatible</div>
<div class="tl" style="top:491px">blood and plasma were shown to be highly hemocompatible and the adsorption <span class="tb">[41]</span> capacity towards protein-bound</div>
<div class="tl" style="top:509px">uremic toxins from whole blood <span class="tb">[57]</span> and plasma were shown to be highly hemocompatible and the adsorption</div>
<div class="tl" style="top:527px">uremic toxins from whole blood and plasma were shown to be highly hemocompatible and the adsorption</div>
<div class="tl" style="top:545px">the coating of the activated charcoal <span class="tb">[59]</span> core by the hydrophilic polymer selected to prevent the</div>
<div class="tl" style="top:563px">protein-bound toxins was compared with a commercially <span class="tb">[51]</span> available adsorbent under flow conditions</div>
<div class="tl" style="top:581px">with the coating of the activated charcoal core by the hydrophilic polymer selected to prevent</div>
</div>
<div class="hy" style="left:278px;top:302px;width:593px"></div>
<div class="hy" style="left:278px;top:320px;width:122px"></div>
<div class="ho" style="left:436px;top:500px;width:436px"></div>
<div class="ho" style="left:280px;top:518px;width:592px"></div>
<div class="ho" style="left:280px;top:536px;width:592px"></div>
<div class="ho" style="left:280px;top:554px;width:593px"></div>
<div class="ho" style="left:280px;top:572px;width:461px"></div>
<div class="ln" style="top:300px;letter-spacing:0.08px">adsorb protein-bound uremic toxins <span class="g">[40]</span>. Also, AST-120 is an orally administered, intestinal, activated</div>
<div class="ln" style="top:318px;letter-spacing:0.31px">carbon adsorbent particle that adsorbs uremic toxins like indole as a precursor of indoxyl sulfate.</div>
<div class="ln" style="top:336px;letter-spacing:0.40px">AST-120 was shown to improve the uremic condition in CKD patients and prolong the time to</div>
<div class="ln" style="top:354px;letter-spacing:0.22px">initiation of hemodialysis. More specifically, a decrease in serum indoxyl sulfate was observed in a</div>
<div class="ln" style="top:372px;letter-spacing:0.31px">dose-dependent manner by reducing the absorption of indole from the gastrointestinal tract in the</div>
<div class="ln" style="top:390px;letter-spacing:0.24px">presence of AST-120 [<span class="b">41</span>,<span class="b">42</span>]. However, creating whole-blood adsorbents for the treatment of CKD</div>
<div class="ln" style="top:408px;letter-spacing:0.13px">patients still poses a challenge. Recently, Pavlenko et al. showed the removal of protein-bound toxins</div>
<div class="ln" style="top:426px;letter-spacing:0.20px">from human plasma after 4 h incubation with a carbon-based adsorbent in a static setup [<span class="b">43</span>]. In this</div>
<div class="ln" style="top:444px;letter-spacing:0.27px">study, we developed a highly porous, whole-blood-hemocompatible adsorbent particle with a high</div>
<div class="ln" style="top:462px;letter-spacing:0.27px">adsorption capacity towards hydrophobic uremic toxins under flow conditions for the treatment of</div>
<div class="ln" style="top:480px;letter-spacing:0.17px">patients with CKD. The newly developed bifunctional whole-blood adsorbent particle is specifically</div>
<div class="ln" style="top:498px;letter-spacing:0.12px">designed for the removal of hydrophobic, protein-bound uremic toxins and consists of a hydrophobic,</div>
<div class="ln" style="top:516px;letter-spacing:0.18px">porous, activated charcoal core and a hydrophilic coating with PVP. Due to the hydrophobic, porous</div>
<div class="ln" style="top:534px;letter-spacing:0.29px">core, hydrophobic uremic toxins may diffuse into the activated charcoal and bind there.&nbsp; PVP was</div>
<div class="ln" style="top:552px;letter-spacing:0.27px">chosen as the hydrophilic coating to counteract the binding of plasma proteins to the particle <span class="g" style="color:#3d6a10">[44]</span>.</div>
<div class="ln" style="top:570px;letter-spacing:0.19px">This complements the size-mediated exclusion of plasma proteins from the hydrophobic core by the</div>
<div class="ln" style="top:588px;letter-spacing:0.07px">pore size of the particle.&nbsp; Additionally, the coating with PVP was selected to induce hemocompatibility</div>
<div class="ln" style="top:606px;letter-spacing:0.26px">of the particles for whole-blood applications, as interference with protein adsorption also prevents</div>
<div class="ln last" style="top:624px">downstream biological reactions [<span class="b">45</span>].</div>
<div class="ln" style="top:642px;letter-spacing:0.40px;left:310px;width:560px">Activated charcoal has already been used for the adsorption of methionine, tyrosine, and</div>
<div class="abs" style="left:280px;top:256px;font-family:'Liberation Serif',serif;font-size:10.9px;color:#111;-webkit-text-stroke-width:.1px;white-space:nowrap;line-height:16px"><i>Toxins</i> <b>2019</b>, <i>11</i>, 389</div>
<div class="abs" style="left:770px;width:100px;text-align:right;top:256px;font-family:'Liberation Serif',serif;font-size:10.9px;color:#111;-webkit-text-stroke-width:.1px;white-space:nowrap;line-height:16px">8 of 16</div>
<svg class="abs" style="left:0;top:0;pointer-events:none" width="1024" height="657" viewBox="0 0 1024 657">
<defs><filter id="sh" x="-20%" y="-20%" width="140%" height="140%"><feGaussianBlur stdDeviation="1.1"/></filter></defs>
<polygon points="212.2,230.4 282.6,156.9 282.2,164.1 295.6,140.3 272.7,155.2 279.9,154.4 211.2,229.4" fill="#2a2a2a" opacity=".75" filter="url(#sh)" transform="translate(2.2,2)"/>
<polygon points="212.2,230.4 282.6,156.9 282.2,164.1 295.6,140.3 272.7,155.2 279.9,154.4 211.2,229.4" fill="#f20d0d" stroke="#f20d0d" stroke-width=".6" stroke-linejoin="round"/>
<polygon points="620.3,270.8 567.6,308.1 569.0,301.5 551.8,322.0 576.5,311.7 569.8,311.1 621.3,272.0" fill="#2a2a2a" opacity=".75" filter="url(#sh)" transform="translate(2.2,2)"/>
<polygon points="620.3,270.8 567.6,308.1 569.0,301.5 551.8,322.0 576.5,311.7 569.8,311.1 621.3,272.0" fill="#f20d0d" stroke="#f20d0d" stroke-width=".6" stroke-linejoin="round"/>
<path d="M301.2 434.2 L358.4 370.8" stroke="#f01414" stroke-width="1.1" fill="none"/>
<polygon points="352.0,378.0 355.5,374.2 357.2,375.7 359.6,369.5 353.8,372.6 355.4,374.1 352.0,378.0" fill="#f01414"/>
<path d="M512.5 333.6 L666 352.6" stroke="#000" stroke-width="1.6" fill="none"/>
<rect x="495" y="334" width="17.5" height="18" rx="1.5" fill="#000"/>
<path d="M504 337.4 C507.6 337.4 510.2 339.3 510.2 341.8 C510.2 344.3 507.6 346.2 504 346.2 C503.2 346.2 502.5 346.1 501.8 345.9 L499 348.4 L499.8 345 C498.6 344.2 497.8 343.1 497.8 341.8 C497.8 339.3 500.4 337.4 504 337.4 Z" fill="#fff"/>
</svg>
<div class="abs" style="left:666px;top:353px;width:316px;height:149px;background:#fff;border:1px solid #c9c9c9;border-radius:4px;box-shadow:0 0 7px rgba(0,0,0,.26)"></div>
<div class="abs" style="left:684px;top:370.6px;font-size:12.8px;line-height:16px;color:#222;letter-spacing:.1px">admin</div>
<div class="abs" style="left:790px;top:370.6px;width:150.4px;text-align:right;font-size:12.8px;line-height:16px;color:#222;white-space:nowrap">2024-10-29 13:31:58</div>
<div class="abs" style="left:945px;top:366px;width:24px;height:24px;border:1px solid #dde3ea;border-radius:4.5px;background:#f8fafc;text-align:center;font-size:12.5px;line-height:22px;color:#222">X</div>
<div class="abs" style="left:684px;top:392px;width:256px;height:80px;border:1px solid #cfcfcf;border-radius:4px;background:#fff"></div>
<div class="abs" style="left:689.5px;top:395.2px;color:#222"><span class="tx" style="font-size:12px;line-height:14.2px;padding-left:0.5px">单机100</span></div>
<div class="abs" style="left:735.5px;top:396px;width:1px;height:14px;background:#111"></div>

<div class="abs" style="left:983px;top:335px;width:40px;height:190px;background:#fff"></div>

<svg class="abs" style="left:900px;top:598px" width="124" height="59" viewBox="900 598 124 59"><g opacity=".27" fill="#2b2b2b" stroke="#2b2b2b" stroke-width="3.2" stroke-linejoin="round">
<path d="M928.1 622.5 L929.3 630.6 L923.6 632.9 L918.8 631.8 L913.7 632.3 L910.3 627.2 L910.0 620.8 L909.8 614.2 L913.1 609.0 L918.1 609.2 L922.8 607.4 L927.9 609.6 L929.2 616.6Z"/>
<path d="M954.0 622.9 L953.9 630.8 L947.6 631.4 L943.3 631.4 L937.8 633.1 L934.4 627.6 L934.5 620.8 L935.1 614.7 L936.9 607.9 L942.5 607.9 L947.1 608.0 L952.0 610.2 L953.1 616.8Z"/>
<path d="M984.1 622.8 L984.3 630.5 L977.2 633.0 L970.7 633.3 L963.8 632.9 L958.7 627.8 L960.7 620.7 L959.7 614.6 L961.9 607.2 L969.7 607.8 L976.1 607.3 L982.1 610.3 L983.8 616.7Z"/>
<path d="M1019.1 622.6 L1018.7 629.3 L1012.0 632.1 L1005.5 631.6 L998.8 631.4 L993.5 627.1 L992.3 620.8 L992.6 614.2 L996.1 607.6 L1004.4 608.8 L1010.9 608.1 L1018.2 609.9 L1018.9 616.9Z"/>
</g></svg>
<div class="abs" style="left:910.5px;top:603.6px;color:#fff;transform:skewX(-9deg)"><span class="tx" style="font-size:30px;line-height:34.8px;width:19.7px;text-align:center">K</span></div>
<div class="abs" style="left:935px;top:603.6px;color:#fff;transform:skewX(-9deg)"><span class="tx" style="font-size:30px;line-height:34.8px;width:19.7px;text-align:center">K</span></div>
<div class="abs" style="left:959.6px;top:605.6px;color:#fff"><span class="tx" style="font-size:25.8px;line-height:30.7px;padding-left:0.6px">下</span></div>
<div class="abs" style="left:992.4px;top:605px;color:#fff"><span class="tx" style="font-size:26.3px;line-height:31.3px;padding-left:0.6px">载</span></div>
<div class="abs" style="left:909.5px;top:642.6px;font-size:13px;font-weight:bold;line-height:16px;color:#c9c9c9;letter-spacing:.95px;white-space:nowrap">www.kkx.net</div>
</body>
</html>
